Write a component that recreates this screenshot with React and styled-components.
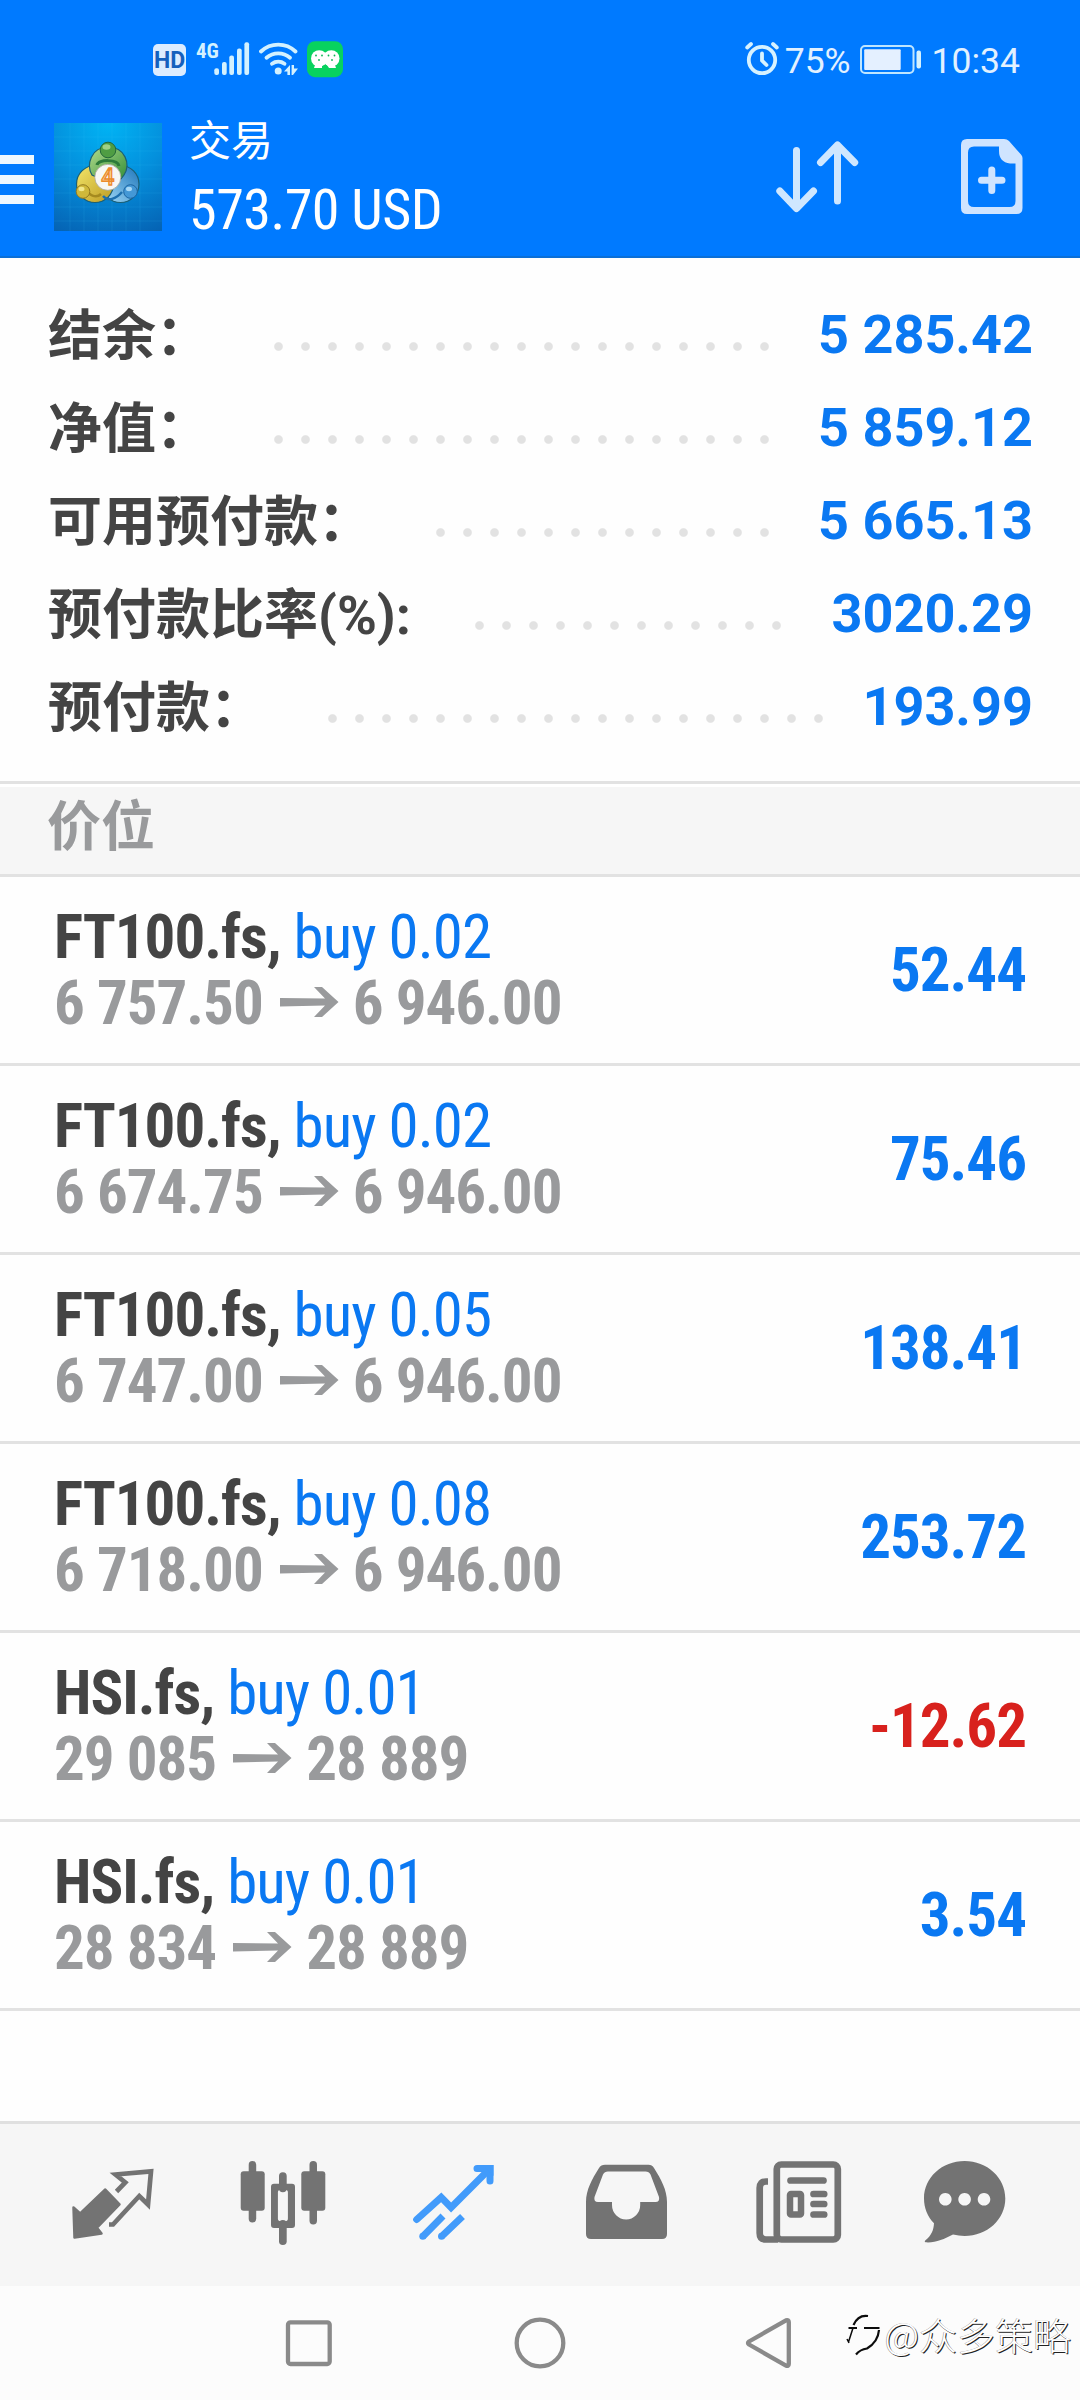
import React from 'react';
import styled, { createGlobalStyle } from 'styled-components';

const GlobalStyle = createGlobalStyle`
  * {
    box-sizing: border-box;
  }

  body {
    margin: 0;
    background: #ffffff;
    font-family: Roboto, 'Noto Sans CJK SC', sans-serif;
  }
`;

const Screen = styled.div`
  position: relative;
  display: flex;
  flex-direction: column;
  width: 1080px;
  height: 2400px;
  overflow: hidden;
  background: #fefefe;
`;

const Header = styled.header`
  height: 258px;
  background: #007aff;
  border-bottom: 2px solid #0b6fd6;
  color: #ffffff;
`;

const StatusBar = styled.div`
  display: flex;
  align-items: center;
  justify-content: space-between;
  height: 100px;
  padding: 20px 60px 0 153px;
  color: #e2f1ff;
  font-size: 35.5px;
  line-height: 40px;

  & svg {
    display: block;
    flex: none;
  }
`;

const StatusLeft = styled.div`
  display: flex;
  align-items: center;
  gap: 8px;
`;

const StatusRight = styled.div`
  display: flex;
  align-items: center;
`;

const HdBadge = styled.span`
  width: 33px;
  height: 32px;
  border-radius: 5px;
  background: #dcecff;
  color: #1560bd;
  font-size: 23px;
  font-weight: 700;
  line-height: 33px;
  text-align: center;
`;

const Percent = styled.span`
  margin: 1px 9px 0 6px;
`;

const Clock = styled.span`
  margin: 1px 0 0 10px;
`;

const AppBar = styled.div`
  display: flex;
  align-items: center;
  height: 153px;
  padding-right: 57px;
`;

const MenuButton = styled.button`
  display: flex;
  flex-direction: column;
  gap: 11px;
  width: 34px;
  margin: 6px 20px 0 0;
  padding: 0;
  border: 0;
  background: none;
`;

const MenuBar = styled.span`
  height: 9px;
  background: #eef7ff;
`;

const TitleBlock = styled.div`
  display: flex;
  flex-direction: column;
  gap: 5px;
  margin-left: 27px;
`;

const Title = styled.div`
  font-size: 42px;
  line-height: 61px;
`;

const Amount = styled.div`
  font-family: 'Roboto Condensed', Roboto, sans-serif;
  font-size: 56px;
  letter-spacing: -0.5px;
  line-height: 66px;
`;

const Actions = styled.div`
  display: flex;
  align-items: center;
  gap: 102px;
  margin-left: auto;
`;

const Summary = styled.section`
  height: 523px;
  padding: 29px 47px 0 48px;
`;

const SummaryRow = styled.div`
  display: flex;
  align-items: center;
  height: 93px;
  font-size: 54px;
  font-weight: 700;
`;

const SummaryLabel = styled.span`
  padding-bottom: 5px;
  color: #444444;
  white-space: nowrap;
`;

const Dots = styled.span`
  width: ${(p) => p.$count * 27}px;
  height: 27px;
  margin: 26px 0 0 55px;
  background: radial-gradient(circle, #e2e2e2 0 3.8px, transparent 4.8px) 0 0 / 27px 27px;
`;

const SummaryValue = styled.span`
  margin-left: auto;
  padding-top: 2px;
  color: #0a78f2;
`;

const SectionTitle = styled.h2`
  height: 96px;
  margin: 0;
  padding-left: 47px;
  border-top: 3px solid #e2e2e2;
  border-bottom: 3px solid #e2e2e2;
  background: #f6f6f6;
  box-shadow: inset 0 3px 0 #ffffff;
  color: #999a9c;
  font-size: 54px;
  font-weight: 700;
  line-height: 87px;
`;

const PositionRow = styled.div`
  display: flex;
  align-items: center;
  justify-content: space-between;
  height: 189px;
  padding: 0 54px;
  border-bottom: 3px solid #e2e2e2;
  font-family: 'Roboto Condensed', Roboto, sans-serif;
  font-size: 61px;
  font-weight: 700;
  letter-spacing: -1px;
  line-height: 66px;
  white-space: nowrap;
`;

const Symbol = styled.div`
  color: #444444;
`;

const Volume = styled.span`
  color: #0a78f2;
  font-weight: 400;
`;

const Prices = styled.div`
  display: flex;
  align-items: center;
  color: #999a9c;

  & svg {
    margin: 0 14px 3px 17px;
  }
`;

const Profit = styled.div`
  color: ${(p) => (p.$loss ? '#d8211d' : '#0a78f2')};
`;

const TabBar = styled.nav`
  display: flex;
  height: 165px;
  margin-top: auto;
  padding: 0 26px;
  border-top: 3px solid #e0e0e0;
  background: #f6f6f6;
`;

const Tab = styled.button`
  display: flex;
  flex: 1;
  align-items: center;
  justify-content: center;
  padding: 0;
  border: 0;
  background: none;
  color: ${(p) => (p.$active ? '#429bfb' : '#737373')};
`;

const SystemNav = styled.div`
  display: flex;
  align-items: center;
  height: 114px;
  padding-left: 283px;
  gap: 179px;
  background: #fcfcfc;
`;

const Watermark = styled.div`
  position: absolute;
  right: 9px;
  bottom: 38px;
  display: flex;
  align-items: center;
  gap: 1px;
  color: #ffffff;
  font-family: 'Noto Sans CJK SC', sans-serif;
  font-size: 38px;
  font-weight: 300;
  line-height: 56px;
  text-shadow: 1px 1px 0.5px #222222, -0.5px -0.5px 0.5px #8a8a8a;
`;

const SignalIcon = () => (
  <svg width="57" height="40" viewBox="0 0 57 40" fill="#d3f1ff">
    <text x="2" y="17.5" fontFamily="'Roboto Condensed', Roboto, sans-serif" fontSize="21" fontWeight="700">4G</text>
    <rect x="20.3" y="28.3" width="4.7" height="6.7" rx="2" />
    <rect x="28" y="22" width="4.7" height="13" rx="2" />
    <rect x="35.3" y="15.5" width="4.7" height="19.5" rx="2" />
    <rect x="43" y="8.5" width="4.7" height="26.5" rx="2" />
    <rect x="50.4" y="2.2" width="4.7" height="32.8" rx="2" />
  </svg>
);

const WifiIcon = () => (
  <svg width="40" height="40" viewBox="0 0 40 40" fill="none" stroke="#d3f1ff" strokeWidth="3.8" strokeLinecap="round">
    <path d="M2 11.5A25 25 0 0 1 36.5 11.5" />
    <path d="M7.5 17.8A18 18 0 0 1 31 17.8" />
    <path d="M13 23.8A10.5 10.5 0 0 1 25.5 23.8" />
    <g fill="#d3f1ff" stroke="none">
      <circle cx="19.2" cy="31" r="3.5" />
      <path d="M25 31.5L31 25v10h-2.6v-3.500zM32.6 25h2.4v3.5h4L34 35h-1.4z" />
    </g>
  </svg>
);

const ChatAppIcon = () => (
  <svg width="36" height="40" viewBox="0 0 36 40">
    <rect y="1.2" width="36" height="36" rx="8" fill="#08d25f" />
    <g fill="#fff">
      <circle cx="12.2" cy="18.4" r="8.2" />
      <circle cx="24.3" cy="18.4" r="8.2" />
      <path d="M8 25h7v3H7zM20 25h8l1 3h-7z" />
    </g>
    <g fill="#08b655">
      <circle cx="9" cy="15.5" r="0.9" />
      <circle cx="15" cy="15.5" r="0.9" />
      <circle cx="12" cy="20" r="0.9" />
      <circle cx="21.5" cy="15.5" r="0.9" />
      <circle cx="27.5" cy="15.5" r="0.9" />
      <circle cx="25" cy="20" r="0.9" />
    </g>
  </svg>
);

const AlarmIcon = () => (
  <svg width="34" height="40" viewBox="0 0 34 40" fill="none" stroke="#d6f2ff" strokeWidth="3.8" strokeLinecap="round">
    <circle cx="17" cy="20" r="13.2" />
    <path d="M17 13.5V20.5L21.5 25" />
    <path d="M2.2 7.5L6 4M31.8 7.5L28 4" />
  </svg>
);

const BatteryIcon = () => (
  <svg width="62" height="40" viewBox="0 0 62 40">
    <rect x="1" y="6" width="52.5" height="27" rx="4" fill="none" stroke="#bfe6ff" strokeWidth="2" />
    <rect x="4.2" y="9.2" width="36.5" height="20.8" rx="1" fill="#e4f0ff" />
    <rect x="56.5" y="10.5" width="4.5" height="18" rx="2" fill="#d6f2ff" />
  </svg>
);

const Logo = () => (
  <svg width="108" height="108" viewBox="0 0 108 108">
    <defs>
      <radialGradient id="logoBg" cx="0.5" cy="0" r="1.1">
        <stop offset="0" stopColor="#00b4f5" />
        <stop offset="0.5" stopColor="#048fdc" />
        <stop offset="1" stopColor="#0563b4" />
      </radialGradient>
      <linearGradient id="green" x1="0" y1="0" x2="1" y2="1">
        <stop offset="0" stopColor="#b4dc8c" />
        <stop offset="1" stopColor="#2c8a35" />
      </linearGradient>
      <linearGradient id="yellow" x1="0" y1="0" x2="1" y2="1">
        <stop offset="0" stopColor="#f3e76a" />
        <stop offset="1" stopColor="#bd9a22" />
      </linearGradient>
      <linearGradient id="blue" x1="0" y1="1" x2="1" y2="0">
        <stop offset="0" stopColor="#a5dcf8" />
        <stop offset="1" stopColor="#1b74ba" />
      </linearGradient>
    </defs>
    <rect width="108" height="108" fill="url(#logoBg)" />
    <path
      d="M16 0V108M30 0V108M44 0V108M58 0V108M72 0V108M86 0V108M0 14H108M0 28H108M0 42H108M0 56H108M0 70H108M0 84H108M0 98H108"
      stroke="#4cc3ff"
      strokeOpacity="0.12"
    />
    <g stroke="#1c5f73" strokeWidth="1.2">
      <circle cx="66.5" cy="61" r="18.5" fill="url(#blue)" />
      <circle cx="41" cy="61" r="18.5" fill="url(#yellow)" />
      <path d="M38 52C32 42 37 24 54 24C71 24 77 41 70 52C67 57 62 60 56 60Z" fill="url(#green)" />
    </g>
    <path d="M49 73C54 79 62 76 68 69" fill="none" stroke="#1d6fae" strokeWidth="2.5" />
    <path d="M33 66C34 72 42 76 47 71" fill="none" stroke="#a58a1f" strokeWidth="2.5" />
    <path d="M43 42C44 36 64 36 65 43" fill="none" stroke="#2c7a3a" strokeWidth="3" />
    <circle cx="54" cy="27" r="7.8" fill="#4f9d43" stroke="#24683a" />
    <ellipse cx="52.5" cy="24" rx="4" ry="2.8" fill="#9fd085" />
    <circle cx="29" cy="68.5" r="6.8" fill="#cfb83a" stroke="#937a20" />
    <ellipse cx="27.5" cy="66" rx="3" ry="2.2" fill="#f1e78c" />
    <circle cx="76.5" cy="68.5" r="6.8" fill="#4498d6" stroke="#1b65a3" />
    <ellipse cx="75" cy="66" rx="3" ry="2.2" fill="#a8d8f6" />
    <circle cx="53.8" cy="54.3" r="13" fill="#f7f7f5" stroke="#a9a79a" strokeWidth="0.8" />
    <text
      x="53.8"
      y="62"
      fill="#fbd5a0"
      stroke="#ec8a2c"
      strokeWidth="1.3"
      fontFamily="Roboto, sans-serif"
      fontSize="23"
      fontWeight="500"
      textAnchor="middle"
    >
      4
    </text>
  </svg>
);

const SortIcon = () => (
  <svg width="83" height="74" viewBox="0 0 83 74" fill="none" stroke="#cfe7ff" strokeWidth="7" strokeLinecap="round" strokeLinejoin="round">
    <path d="M20.5 10.5V68M3.8 51L20.5 68.5L37.5 51" />
    <path d="M61.5 61V5M44.5 22.5L61.5 5L78.7 22.5" />
  </svg>
);

const NewOrderIcon = () => (
  <svg width="62" height="76" viewBox="0 0 62 76" fill="#cfe4ff">
    <path
      fillRule="evenodd"
      d="M6 0H43Q46 0 48 2L60 15.5Q61.5 17 61.5 19V69Q61.5 75 55.5 75H6Q0 75 0 69V6Q0 0 6 0ZM13 7.5Q7 7.5 7 13.5V62Q7 68 13 68H48.5Q54.5 68 54.5 62V24.5H49Q38 23 38 12V7.5Z"
    />
    <path d="M30.8 31V51.5M20.5 41.2H41" stroke="#cfe4ff" strokeWidth="7" strokeLinecap="round" />
  </svg>
);

const PriceArrow = () => (
  <svg width="59" height="30" viewBox="0 0 59 30" fill="#999a9c">
    <path d="M0 11L45 11.5L34 0H42L58.500 15L42 30H34L45 18.5L0 19.5Z" />
  </svg>
);

const QuotesIcon = () => (
  <svg width="90" height="90" viewBox="0 0 90 90" fill="none">
    <path
      d="M6.5 47.5L13.2 53.5L38.3 29.5L52.5 44.3L30 67.7L34.5 73.5L7.5 77.5Z"
      fill="currentColor"
      stroke="currentColor"
      strokeWidth="2.5"
      strokeLinejoin="round"
    />
    <path d="M49.5 31.500L58.300 22.5L48.5 14.500L84 11.3L81 44.5L72.3 36L46 64.5H42" stroke="currentColor" strokeWidth="4.7" />
  </svg>
);

const ChartIcon = () => (
  <svg width="90" height="90" viewBox="0 0 90 90" fill="currentColor">
    <rect x="10.7" y="1" width="7.5" height="61.5" rx="3.7" />
    <rect x="2.7" y="11.3" width="24" height="39.5" rx="3" />
    <rect x="41" y="12.3" width="7.7" height="20" rx="3.8" />
    <rect x="41" y="60" width="7.7" height="25" rx="3.8" />
    <path
      fillRule="evenodd"
      d="M36 23.7H54Q57 23.7 57 26.7V65Q57 68 54 68H36Q33 68 33 65V26.7Q33 23.7 36 23.7ZM42.5 29.7Q39.9 29.7 39.9 32.5V58.5Q39.9 61.3 42.5 61.3H47.3Q49.9 61.3 49.9 58.5V32.5Q49.9 29.7 47.3 29.7Z"
    />
    <rect x="71.5" y="1" width="7.5" height="63.5" rx="3.7" />
    <rect x="63.3" y="11.3" width="24" height="39.5" rx="3" />
  </svg>
);

const TradeIcon = () => (
  <svg width="90" height="90" viewBox="0 0 90 90" fill="none" stroke="currentColor" strokeWidth="7">
    <path d="M7.7 59.5L32.2 37.3L42.1 47.5L80 9.5" strokeLinecap="round" />
    <path d="M68 8.5H81V21" strokeLinecap="round" />
    <path d="M74 5H84.5V16Z" fill="currentColor" stroke="none" />
    <path d="M13.8 76.5L34 56M32.5 76.5L53.5 56.5" />
    <g fill="currentColor" stroke="none">
      <circle cx="13.8" cy="76.2" r="3.5" />
      <circle cx="32.5" cy="76.2" r="3.5" />
    </g>
  </svg>
);

const HistoryIcon = () => (
  <svg width="90" height="90" viewBox="0 0 90 90" fill="currentColor">
    <path
      fillRule="evenodd"
      d="M24 4.7H67.5Q71 4.7 73 8C80 19 86 30 86 42V74Q86 79 81 79H10Q5 79 5 74V42C5 30 11 19 18 8Q20 4.7 24 4.7ZM27 11.5Q23.5 11.5 22 14.5L13.5 37Q12.5 42 17 42H31V45A14 14.3 0 0 0 59.2 45V42H74.5Q79 42 78 37L69.5 14.5Q68 11.5 64.5 11.5Z"
    />
  </svg>
);

const NewsIcon = () => (
  <svg width="90" height="90" viewBox="0 0 90 90" fill="none" stroke="currentColor" strokeWidth="6.7">
    <rect x="24.8" y="4.5" width="61" height="75" rx="4.5" />
    <path d="M16 21.5H14Q7.7 21.5 7.7 28V73Q7.7 79.5 14 79.5H26" />
    <path d="M38.5 20.5H71.5M61.5 34H72.2M61.5 44H72.2M61.5 54.5H72.2" strokeLinecap="round" />
    <rect x="38" y="34" width="11" height="20.5" rx="1" strokeWidth="6.5" />
  </svg>
);

const ChatIcon = () => (
  <svg width="90" height="90" viewBox="0 0 90 90" fill="currentColor">
    <path
      fillRule="evenodd"
      d="M41.6 1C64 1 82.3 17.5 82.3 38.5S64 76 41.6 76C37.5 76 34 75.5 30 74.6C21 79.5 12 83 2.5 82.3Q1 82 2.2 80.5C9 75 10.5 70 11 63.3C4.5 56.5 1 48 1 38.5C1 17.5 19 1 41.6 1ZM22.3 33A6.3 6.3 0 1 0 22.31 33ZM41.6 33A6.3 6.3 0 1 0 41.61 33ZM61 33A6.3 6.3 0 1 0 61.01 33Z"
    />
  </svg>
);

const RecentsIcon = () => (
  <svg width="52" height="52" viewBox="0 0 52 52" fill="none" stroke="#8a8a8a" strokeWidth="4.3">
    <rect x="5" y="5.3" width="41.7" height="41.7" rx="2.5" />
  </svg>
);

const HomeIcon = () => (
  <svg width="52" height="52" viewBox="0 0 52 52" fill="none" stroke="#8a8a8a" strokeWidth="4.3">
    <circle cx="26" cy="26" r="23.3" />
  </svg>
);

const BackIcon = () => (
  <svg width="52" height="52" viewBox="0 0 52 52" fill="none" stroke="#8a8a8a" strokeWidth="4.3" strokeLinejoin="round">
    <path d="M4 24.5Q2 26 4 27.5L41 48.7Q43.8 49.5 43.8 47V5Q43.8 2.5 41 3.3Z" />
  </svg>
);

const WatermarkLogo = () => (
  <svg width="38" height="46" viewBox="0 0 38 46" fill="none" stroke="#0c0c0c" strokeWidth="1.5">
    <path d="M8.5 14Q13 3.5 23 5" strokeWidth="2.2" />
    <path d="M3.5 17H12M19 17H34.500" strokeWidth="2.200" />
    <path d="M8 17L3.5 31M2 28L4 32" />
    <path d="M34 19Q33 31 22 37.500Q15 38.500 11 43.500" strokeWidth="2.200" />
  </svg>
);

const summary = [
  { label: '结余：', dots: 19, value: '5 285.42' },
  { label: '净值：', dots: 19, value: '5 859.12' },
  { label: '可用预付款：', dots: 13, value: '5 665.13' },
  { label: '预付款比率(%):', dots: 12, value: '3020.29' },
  { label: '预付款：', dots: 19, value: '193.99' },
];

const positions = [
  { symbol: 'FT100.fs', volume: '0.02', open: '6 757.50', current: '6 946.00', profit: '52.44' },
  { symbol: 'FT100.fs', volume: '0.02', open: '6 674.75', current: '6 946.00', profit: '75.46' },
  { symbol: 'FT100.fs', volume: '0.05', open: '6 747.00', current: '6 946.00', profit: '138.41' },
  { symbol: 'FT100.fs', volume: '0.08', open: '6 718.00', current: '6 946.00', profit: '253.72' },
  { symbol: 'HSI.fs', volume: '0.01', open: '29 085', current: '28 889', profit: '-12.62' },
  { symbol: 'HSI.fs', volume: '0.01', open: '28 834', current: '28 889', profit: '3.54' },
];

const tabs = [QuotesIcon, ChartIcon, TradeIcon, HistoryIcon, NewsIcon, ChatIcon];

const App = () => {
  return (
    <Screen>
      <GlobalStyle />
      <Header>
        <StatusBar>
          <StatusLeft>
            <HdBadge>HD</HdBadge>
            <SignalIcon />
            <WifiIcon />
            <ChatAppIcon />
          </StatusLeft>
          <StatusRight>
            <AlarmIcon />
            <Percent>75%</Percent>
            <BatteryIcon />
            <Clock>10:34</Clock>
          </StatusRight>
        </StatusBar>
        <AppBar>
          <MenuButton>
            <MenuBar />
            <MenuBar />
            <MenuBar />
          </MenuButton>
          <Logo />
          <TitleBlock>
            <Title>交易</Title>
            <Amount>573.70 USD</Amount>
          </TitleBlock>
          <Actions>
            <SortIcon />
            <NewOrderIcon />
          </Actions>
        </AppBar>
      </Header>

      <Summary>
        {summary.map((item) => (
          <SummaryRow key={item.label}>
            <SummaryLabel>{item.label}</SummaryLabel>
            <Dots $count={item.dots} />
            <SummaryValue>{item.value}</SummaryValue>
          </SummaryRow>
        ))}
      </Summary>

      <SectionTitle>价位</SectionTitle>
      {positions.map((item) => (
        <PositionRow key={item.open}>
          <div>
            <Symbol>
              {item.symbol}, <Volume>buy {item.volume}</Volume>
            </Symbol>
            <Prices>
              {item.open}
              <PriceArrow />
              {item.current}
            </Prices>
          </div>
          <Profit $loss={item.profit.startsWith('-')}>{item.profit}</Profit>
        </PositionRow>
      ))}

      <TabBar>
        {tabs.map((Icon, i) => (
          <Tab key={i} $active={Icon === TradeIcon}>
            <Icon />
          </Tab>
        ))}
      </TabBar>
      <SystemNav>
        <RecentsIcon />
        <HomeIcon />
        <BackIcon />
      </SystemNav>
      <Watermark>
        <WatermarkLogo />
        @众多策略
      </Watermark>
    </Screen>
  );
};

export default App;
